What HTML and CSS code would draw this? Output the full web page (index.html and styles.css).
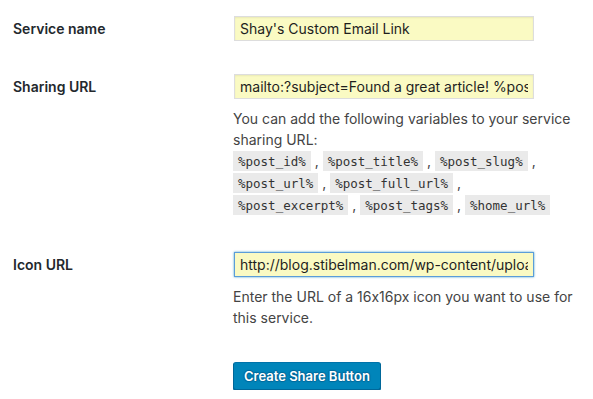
FILE: index.html
```html
<!DOCTYPE html>
<html>
<head>
<meta charset="utf-8">
<link rel="stylesheet" href="styles.css">
</head>
<body>
<form class="wrap">
  <div class="row">
    <div class="label">Service name</div>
    <div class="field">
      <input class="text" type="text" value="Shay's Custom Email Link">
    </div>
  </div>
  <div class="row">
    <div class="label">Sharing URL</div>
    <div class="field">
      <input class="text" type="text" value="mailto:?subject=Found a great article! %post_title%&amp;body=%post_url%">
      <p class="description">You can add the following variables to your service sharing URL:<br><code>%post_id%</code> , <code>%post_title%</code> , <code>%post_slug%</code> ,<br><code>%post_url%</code> , <code>%post_full_url%</code> ,<br><code>%post_excerpt%</code> , <code>%post_tags%</code> , <code>%home_url%</code></p>
    </div>
  </div>
  <div class="row">
    <div class="label">Icon URL</div>
    <div class="field">
      <input class="text focus" type="text" value="http://blog.stibelman.com/wp-content/uploads/2016/email-icon.png">
      <p class="description">Enter the URL of a 16x16px icon you want to use for this service.</p>
    </div>
  </div>
  <div class="row submit-row">
    <div></div>
    <div class="submit-cell">
      <button type="button" class="button-primary">Create Share Button</button>
    </div>
  </div>
</form>
</body>
</html>
```

FILE: styles.css
```css
html, body {
  margin: 0;
  padding: 0;
  background: #ffffff;
}
body {
  font-family: Inter, "Noto Sans", sans-serif;
  font-feature-settings: "calt" 0;
  font-size: 14px;
  color: #444;
}
.wrap {
  padding-left: 13px;
  width: 580px;
}
.row {
  display: grid;
  grid-template-columns: 210px 360px;
}
.label {
  padding: 20px 10px 20px 0;
  font-weight: 600;
  line-height: 18px;
  color: #23282d;
}
.field {
  padding: 15px 0 15px 10px;
}
.text {
  display: block;
  box-sizing: border-box;
  width: 300px;
  height: 25px;
  margin: 1px;
  padding: 0 5px;
  border: 1px solid #ddd;
  background: #fafac3;
  font-family: Inter, "Noto Sans", sans-serif;
  font-feature-settings: "calt" 0;
  font-size: 14px;
  color: #1e1e1e;
  outline: none;
  box-shadow: inset 0 1px 2px rgba(0,0,0,.07);
}
.text.focus {
  border-color: #5b9dd9;
  box-shadow: 0 0 2px rgba(30,140,190,.8);
}
.description {
  margin: 9px 0 5px;
  line-height: 21px;
  color: #444;
}
code {
  font-family: "DejaVu Sans Mono", monospace;
  font-size: 12.5px;
  background: #eaeaea;
  padding: 3px 5px 2px;
  color: #333;
}
.submit-cell {
  padding: 14px 0 0 10px;
}
.button-primary {
  height: 28px;
  padding: 0 10px 1px;
  border: 1px solid #0073aa;
  border-color: #0073aa #006799 #006799;
  border-radius: 3px;
  background: #0085ba;
  box-shadow: 0 1px 0 #006799;
  color: #fff;
  font-family: Inter, "Noto Sans", sans-serif;
  font-size: 13px;
  font-weight: 600;
  text-shadow: 0 -1px 1px #006799, 1px 0 1px #006799, 0 1px 1px #006799, -1px 0 1px #006799;
  cursor: pointer;
}
```
